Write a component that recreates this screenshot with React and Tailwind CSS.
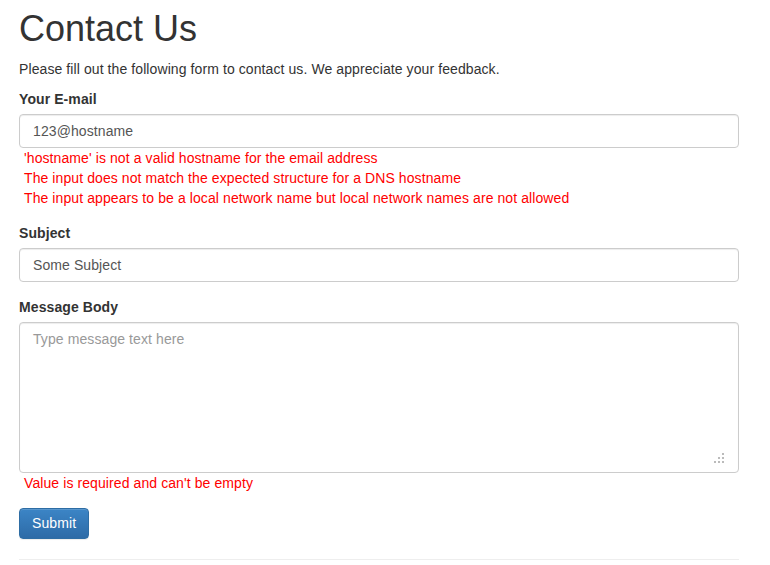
export default function App() {
  const inputCls =
    "block w-full h-[34px] pl-[13px] pr-3 py-[6px] text-[14px] leading-[20px] text-[#555] bg-white border border-[#ccc] rounded-[4px] shadow-[inset_0_1px_1px_rgba(0,0,0,0.075)] outline-none tracking-[0.09px]";
  return (
    <div className="bg-white min-h-[565px] pl-[19px] pr-[31px] pt-[9px] text-[14px] leading-[20px] text-[#333]" style={{ fontFamily: '"Liberation Sans", Arial, sans-serif' }}>
      <h1 className="text-[36px] leading-[39.6px] font-normal mb-[10px] text-[#333]">Contact Us</h1>
      <div className="tracking-[0.09px]">
        <p className="mb-[10px]">Please fill out the following form to contact us. We appreciate your feedback.</p>

        <div className="mb-[15px]">
          <label className="block font-bold mb-[5px]">Your E-mail</label>
          <input className={inputCls} defaultValue="123@hostname" readOnly />
          <ul className="pl-[5px] text-[#f00]">
            <li>'hostname' is not a valid hostname for the email address</li>
            <li>The input does not match the expected structure for a DNS hostname</li>
            <li>The input appears to be a local network name but local network names are not allowed</li>
          </ul>
        </div>

        <div className="mb-[15px]">
          <label className="block font-bold mb-[5px]">Subject</label>
          <input className={inputCls} defaultValue="Some Subject" readOnly />
        </div>

        <div className="mb-[15px]">
          <label className="block font-bold mb-[5px]">Message Body</label>
          <div className="relative">
            <textarea
              className="block w-full h-[151px] resize-none pl-[13px] pr-3 py-[6px] text-[14px] leading-[20px] tracking-[0.09px] text-[#555] bg-white border border-[#ccc] rounded-[4px] shadow-[inset_0_1px_1px_rgba(0,0,0,0.075)] outline-none placeholder:text-[#999]"
              placeholder="Type message text here"
            />
            <svg className="absolute right-[14px] bottom-[8px]" width="12" height="12" viewBox="0 0 12 12">
              <rect x="9" y="0" width="2" height="2" fill="#bbb" />
              <rect x="5" y="4" width="2" height="2" fill="#bbb" />
              <rect x="9" y="4" width="2" height="2" fill="#bbb" />
              <rect x="1" y="8" width="2" height="2" fill="#bbb" />
              <rect x="5" y="8" width="2" height="2" fill="#bbb" />
              <rect x="9" y="8" width="2" height="2" fill="#bbb" />
            </svg>
          </div>
          <ul className="pl-[5px] text-[#f00]">
            <li>Value is required and can't be empty</li>
          </ul>
        </div>

        <button className="h-[31px] px-3 text-white text-[14px] rounded-[4px] border border-[#2e6da4] bg-gradient-to-b from-[#3c85c6] to-[#2d6ba7] shadow-[inset_0_1px_0_rgba(255,255,255,0.15),0_1px_1px_rgba(0,0,0,0.075)]">
          Submit
        </button>
      </div>

      <hr className="mt-[20px] border-0 border-t border-[#eee]" />
    </div>
  );
}
